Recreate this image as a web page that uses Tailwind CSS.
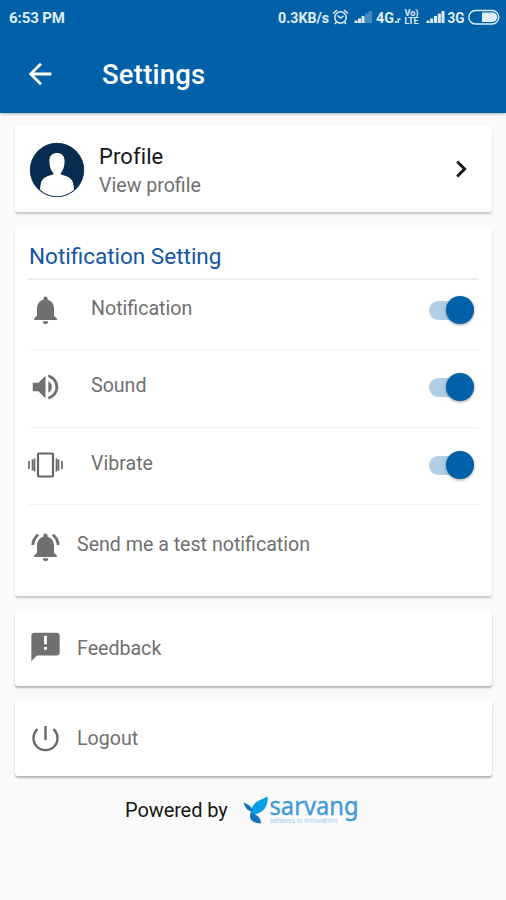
<!DOCTYPE html>
<html lang="en">
<head>
<meta charset="utf-8">
<title>Settings</title>
<script src="https://cdn.jsdelivr.net/npm/@tailwindcss/browser@4"></script>
</head>
<body class="w-[506px] h-[900px] overflow-hidden bg-[#fafafa] font-['Roboto',sans-serif] text-[#707070]">
<header class="h-[113px] bg-[#0061a8] text-white shadow-[0_1px_3px_rgba(0,0,0,0.3)]">
  <div class="h-[35px] pt-px pl-[9px] pr-[6px] flex items-center text-[15px] font-bold leading-none text-[#e0ecf8]">
    <span class="tracking-[-0.1px]">6:53 PM</span>
    <svg class="ml-auto block" width="224" height="24" viewBox="276 6 224 24" fill="#e0ecf8" font-family="Roboto, sans-serif" font-weight="700">
      <text x="278" y="22.500" font-size="14" textLength="51" lengthAdjust="spacingAndGlyphs">0.3KB/s</text>
      <g fill="none" stroke="#e0ecf8" stroke-width="1.5">
        <circle cx="340.500" cy="17.500" r="5.700"/><path d="M337.500 15.500l3 2.500 3-2M333 13.500l4-3.500M348 13.500l-4-3.500M336.500 22l-1.500 2M344.500 22l1.500 2"/>
      </g>
      <path d="M354.500 20.500h3v2.500h-3zM358 18.500h3v4.500h-3zM361.500 16h3v7h-3z"/>
      <path opacity=".3" d="M365 13.500h3.500v9.500H365zM368.500 11h3.500v12h-3.500z"/>
      <text x="376" y="22.500" font-size="14" textLength="18" lengthAdjust="spacingAndGlyphs">4G</text>
      <path d="M395 21h1.800v2H395zM397.500 18.500h1.500v4.500h-1.500zM399 18.500h1.500v1.500H399z"/>
      <text x="404.500" y="16.200" font-size="8.500" textLength="14" lengthAdjust="spacingAndGlyphs">Vo)</text>
      <text x="404.500" y="23.700" font-size="8.500" textLength="14" lengthAdjust="spacingAndGlyphs">LTE</text>
      <path d="M426.500 20.500h3v2.500h-3zM430.200 18.500h3v4.500h-3zM434 16h3v7h-3zM437.800 13.500h3v9.500h-3zM441.500 11h3v12h-3z"/>
      <text x="447.500" y="22.500" font-size="14" textLength="17" lengthAdjust="spacingAndGlyphs">3G</text>
      <rect x="468.800" y="10.500" width="30" height="13.500" rx="6.750" fill="none" stroke="#e0ecf8" stroke-width="1.400"/>
      <path d="M482 12.500h10.500a4.750 4.750 0 0 1 0 9.500H482z"/>
    </svg>
  </div>
  <div class="h-[78px] flex items-center">
    <svg class="ml-[23px] block" width="34" height="34" viewBox="0 0 24 24" fill="white"><path d="M20 11H7.830l5.590-5.590L12 4l-8 8 8 8 1.410-1.410L7.830 13H20z"/></svg>
    <h1 class="ml-[45px] text-[27.500px] font-medium leading-[32px] pt-[2px] tracking-[0.2px]">Settings</h1>
  </div>
</header>

<main class="pt-[13px] pl-[15px] pr-[14px]">
  <section class="h-[86px] mb-[15px] bg-white rounded-[3px] shadow-[0_2px_2px_rgba(0,0,0,0.2)] flex items-center pl-[14px] pr-[14px]">
    <svg class="block mt-[2px]" width="56" height="56" viewBox="0 0 56 56">
      <circle cx="28" cy="28" r="27" fill="#062c50"/>
      <path d="M28 11c4.800 0 7.600 3 7.600 8.200 0 5.300-1.600 9.300-3.900 11.800v1.600c2.500 1 10.500 1.700 12.300 8l1.200 7C40.500 52 35 54.500 28 54.500S15.500 52 10.800 47.600l1.200-7c1.800-6.300 9.800-7 12.300-8V31c-2.300-2.500-3.900-6.500-3.900-11.800C20.400 14 23.200 11 28 11z" fill="white"/>
      <circle cx="28" cy="28" r="26.700" fill="none" stroke="#062c50" stroke-width=".7"/>
    </svg>
    <div class="ml-[14px] pt-[5px]">
      <div class="text-[22px] leading-[28px] text-[#161616] tracking-[0.1px]">Profile</div>
      <div class="text-[19.600px] leading-[29px]">View profile</div>
    </div>
    <svg class="ml-auto block" width="34" height="34" viewBox="0 0 24 24" fill="#111"><path d="M10 6L8.590 7.410 13.170 12l-4.580 4.590L10 18l6-6z"/></svg>
  </section>

  <section class="h-[369px] mb-[15px] bg-white rounded-[3px] shadow-[0_2px_2px_rgba(0,0,0,0.2)] pl-[13px] pr-[13px]">
    <h2 class="h-[53px] pl-px pt-[13px] border-b-2 border-[#ececec] text-[22.500px] leading-[32px] text-[#1455a4]">Notification Setting</h2>
    <div class="h-[70px] border-b border-[#f3f3f3] flex items-start">
      <svg class="block mt-[13px]" width="35" height="34" viewBox="0 0 24 24" fill="#707070"><path d="M12 22c1.100 0 2-.9 2-2h-4c0 1.100.89 2 2 2zm6-6v-5c0-3.070-1.640-5.640-4.500-6.320V4c0-.83-.67-1.500-1.500-1.500s-1.500.67-1.500 1.500v.68C7.630 5.360 6 7.920 6 11v5l-2 2v1h16v-1l-2-2z"/></svg>
      <span class="ml-[28px] mt-[15px] text-[19.600px] leading-[28px]">Notification</span>
      <span class="ml-auto mr-[5px] mt-[16px] w-[45px] h-[28px] flex items-center">
        <span class="w-[45px] h-[19px] rounded-full bg-[#b0cfe5] flex items-center justify-end"><span class="size-[28px] shrink-0 rounded-full bg-[#0061a8] shadow-[0_1px_3px_rgba(0,0,0,0.4)]"></span></span>
      </span>
    </div>
    <div class="h-[78px] border-b border-[#f3f3f3] flex items-start">
      <svg class="block mt-[20px]" width="35" height="34" viewBox="0 0 24 24" fill="#707070"><path d="M3 9v6h4l5 5V4L7 9H3zm13.500 3c0-1.770-1.020-3.290-2.500-4.030v8.050c1.480-.73 2.500-2.250 2.500-4.020zM14 3.230v2.060c2.890.86 5 3.540 5 6.710s-2.110 5.850-5 6.710v2.060c4.010-.91 7-4.490 7-8.770s-2.990-7.860-7-8.770z"/></svg>
      <span class="ml-[28px] mt-[22px] text-[19.600px] leading-[28px]">Sound</span>
      <span class="ml-auto mr-[5px] mt-[23px] w-[45px] h-[28px] flex items-center">
        <span class="w-[45px] h-[19px] rounded-full bg-[#b0cfe5] flex items-center justify-end"><span class="size-[28px] shrink-0 rounded-full bg-[#0061a8] shadow-[0_1px_3px_rgba(0,0,0,0.4)]"></span></span>
      </span>
    </div>
    <div class="h-[77px] border-b border-[#f3f3f3] flex items-start">
      <svg class="block mt-[20px] -ml-px" width="36" height="34" viewBox="0 0 36 34"><rect x="11" y="5.500" width="15" height="23" rx="1" fill="none" stroke="#666" stroke-width="2.200"/><path d="M2 13v8M5.500 11.500v11M7.500 10.500v13M29.500 10.500v13M31.500 11.500v11M35 13v8" stroke="#666" stroke-width="1.700"/></svg>
      <span class="ml-[28px] mt-[22px] text-[19.600px] leading-[28px]">Vibrate</span>
      <span class="ml-auto mr-[5px] mt-[23px] w-[45px] h-[28px] flex items-center">
        <span class="w-[45px] h-[19px] rounded-full bg-[#b0cfe5] flex items-center justify-end"><span class="size-[28px] shrink-0 rounded-full bg-[#0061a8] shadow-[0_1px_3px_rgba(0,0,0,0.4)]"></span></span>
      </span>
    </div>
    <div class="flex items-start">
      <svg class="block mt-[25px]" width="35" height="34" viewBox="0 0 24 24" fill="#707070"><path d="M7.580 4.080L6.150 2.650C3.750 4.480 2.170 7.300 2.030 10.500h2c.15-2.650 1.510-4.970 3.550-6.420zm12.390 6.420h2c-.15-3.200-1.730-6.020-4.120-7.850l-1.420 1.430c2.020 1.450 3.390 3.770 3.540 6.420zM18 11c0-3.070-1.640-5.640-4.500-6.320V4c0-.83-.67-1.500-1.500-1.500s-1.500.67-1.500 1.500v.68C7.630 5.360 6 7.920 6 11v5l-2 2v1h16v-1l-2-2v-5zm-6 11c.14 0 .27-.01.4-.04.65-.14 1.180-.58 1.440-1.180.1-.24.15-.5.150-.78h-4c.01 1.100.9 2 2.010 2z"/></svg>
      <span class="ml-[14px] mt-[26px] text-[19.600px] leading-[28px]">Send me a test notification</span>
    </div>
  </section>

  <section class="h-[75px] mb-[15px] bg-white rounded-[3px] shadow-[0_2px_2px_rgba(0,0,0,0.28)] px-[13px] flex items-center">
    <svg class="block mb-[3px]" width="35" height="34" viewBox="0 0 24 24" fill="#707070"><path d="M20 2H4c-1.100 0-1.990.9-1.990 2L2 22l4-4h14c1.100 0 2-.9 2-2V4c0-1.100-.9-2-2-2zm-7 12h-2v-2h2v2zm0-4h-2V4h2v6z"/></svg>
    <span class="ml-[14px] pt-px text-[19.600px] leading-[28px]">Feedback</span>
  </section>

  <section class="h-[75px] bg-white rounded-[3px] shadow-[0_2px_2px_rgba(0,0,0,0.28)] px-[13px] flex items-center">
    <svg class="block" width="35" height="34" viewBox="0 0 35 34" fill="none" stroke="#666" stroke-width="2.400"><path d="M17.500 4v14M9.500 7.200a12 12 0 1 0 16 0"/></svg>
    <span class="ml-[14px] pt-px text-[19.600px] leading-[28px]">Logout</span>
  </section>
</main>

<footer class="flex items-center pl-[125px] pt-[10px]">
  <span class="text-[20px] leading-[48px] tracking-[-0.1px] text-[#161616]">Powered by</span>
  <svg class="ml-[14px] block overflow-visible" width="122" height="48" viewBox="241 787 122 48">
    <path d="M266.500 797.500c-6 3.500-16 5-16.300 15 0 1.500.3 2.500.8 3.500 8-1 17-6 15.500-18.500z" fill="#08a0e4"/>
    <path d="M242.500 803.500c5 2 8 3.500 9.500 9-4.500 0-7.500-2.500-9.500-9z" fill="#1673b9"/>
    <path d="M249.500 813c3 2.500 10.500 3 10.500 11.500-7-.5-11-2.500-11-7.500z" fill="#1673b9"/>
    <text x="268.500" y="815.500" font-family="'Noto Sans', sans-serif" font-size="26" fill="#419bd5" stroke="#419bd5" stroke-width=".4" textLength="89" lengthAdjust="spacingAndGlyphs">sarvang</text>
    <text x="269" y="824" font-family="'Noto Sans', sans-serif" font-size="6.500" fill="#a3cdea" textLength="67" lengthAdjust="spacingAndGlyphs">believes in innovation</text>
  </svg>
</footer>
</body>
</html>
